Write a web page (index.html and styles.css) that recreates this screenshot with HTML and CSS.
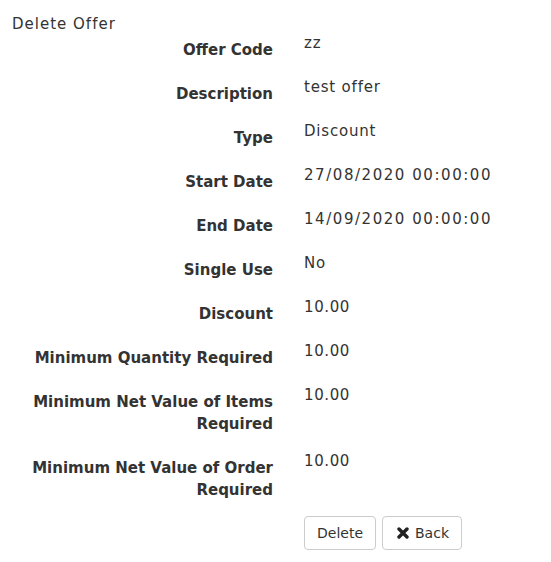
FILE: index.html
```html
<!DOCTYPE html>
<html>
<head>
<meta charset="utf-8">
<title>Delete Offer</title>
<link rel="stylesheet" href="styles.css">
</head>
<body>
<div class="page">
  <h4 class="title">Delete Offer</h4>
  <dl class="details">
    <dt>Offer Code</dt><dd>zz</dd>
    <dt>Description</dt><dd>test offer</dd>
    <dt>Type</dt><dd>Discount</dd>
    <dt>Start Date</dt><dd class="date">27/08/2020 00:00:00</dd>
    <dt>End Date</dt><dd class="date">14/09/2020 00:00:00</dd>
    <dt>Single Use</dt><dd>No</dd>
    <dt>Discount</dt><dd class="num">10.00</dd>
    <dt>Minimum Quantity Required</dt><dd class="num">10.00</dd>
    <dt>Minimum Net Value of Items Required</dt><dd class="num">10.00</dd>
    <dt>Minimum Net Value of Order Required</dt><dd class="num">10.00</dd>
  </dl>
  <div class="actions">
    <button class="btn" type="button">Delete</button>
    <button class="btn" type="button"><svg class="icon" viewBox="0 0 12 12" width="12" height="12" aria-hidden="true"><path d="M2 2 L10 10 M10 2 L2 10" stroke="#222" stroke-width="3.4" stroke-linecap="round" fill="none"/></svg>Back</button>
  </div>
</div>
</body>
</html>
```
FILE: styles.css
```css
html, body {
  margin: 0;
  padding: 0;
  background: #fff;
}
body {
  font-family: "DejaVu Sans", "Noto Sans", sans-serif;
  font-size: 15px;
  line-height: 22px;
  color: #333;
}
.page {
  padding: 13px 12px 0 12px;
}
.title {
  margin: 0;
  font-size: 15px;
  font-weight: normal;
  line-height: 22px;
  letter-spacing: 1px;
  height: 19px;
}
.details {
  display: grid;
  grid-template-columns: 261px 1fr;
  column-gap: 31px;
  row-gap: 15px;
  margin: 0;
}
.details dt {
  font-weight: bold;
  text-align: right;
  padding-top: 7px;
  margin: 0;
}
.details dd {
  margin: 0;
  letter-spacing: 0.8px;
}
.details dd.num {
  letter-spacing: 0.6px;
}
.details dd.date {
  letter-spacing: 1.55px;
}
.actions {
  display: flex;
  gap: 6px;
  margin-top: 15px;
  padding-left: 292px;
}
.btn {
  display: inline-flex;
  align-items: center;
  height: 34px;
  padding: 0 12px;
  background: #fff;
  border: 1px solid #ccc;
  border-radius: 4px;
  font-family: "DejaVu Sans", "Noto Sans", sans-serif;
  font-size: 14px;
  color: #333;
  cursor: pointer;
}
.icon {
  margin: 0 6px 0 2px;
}
```
